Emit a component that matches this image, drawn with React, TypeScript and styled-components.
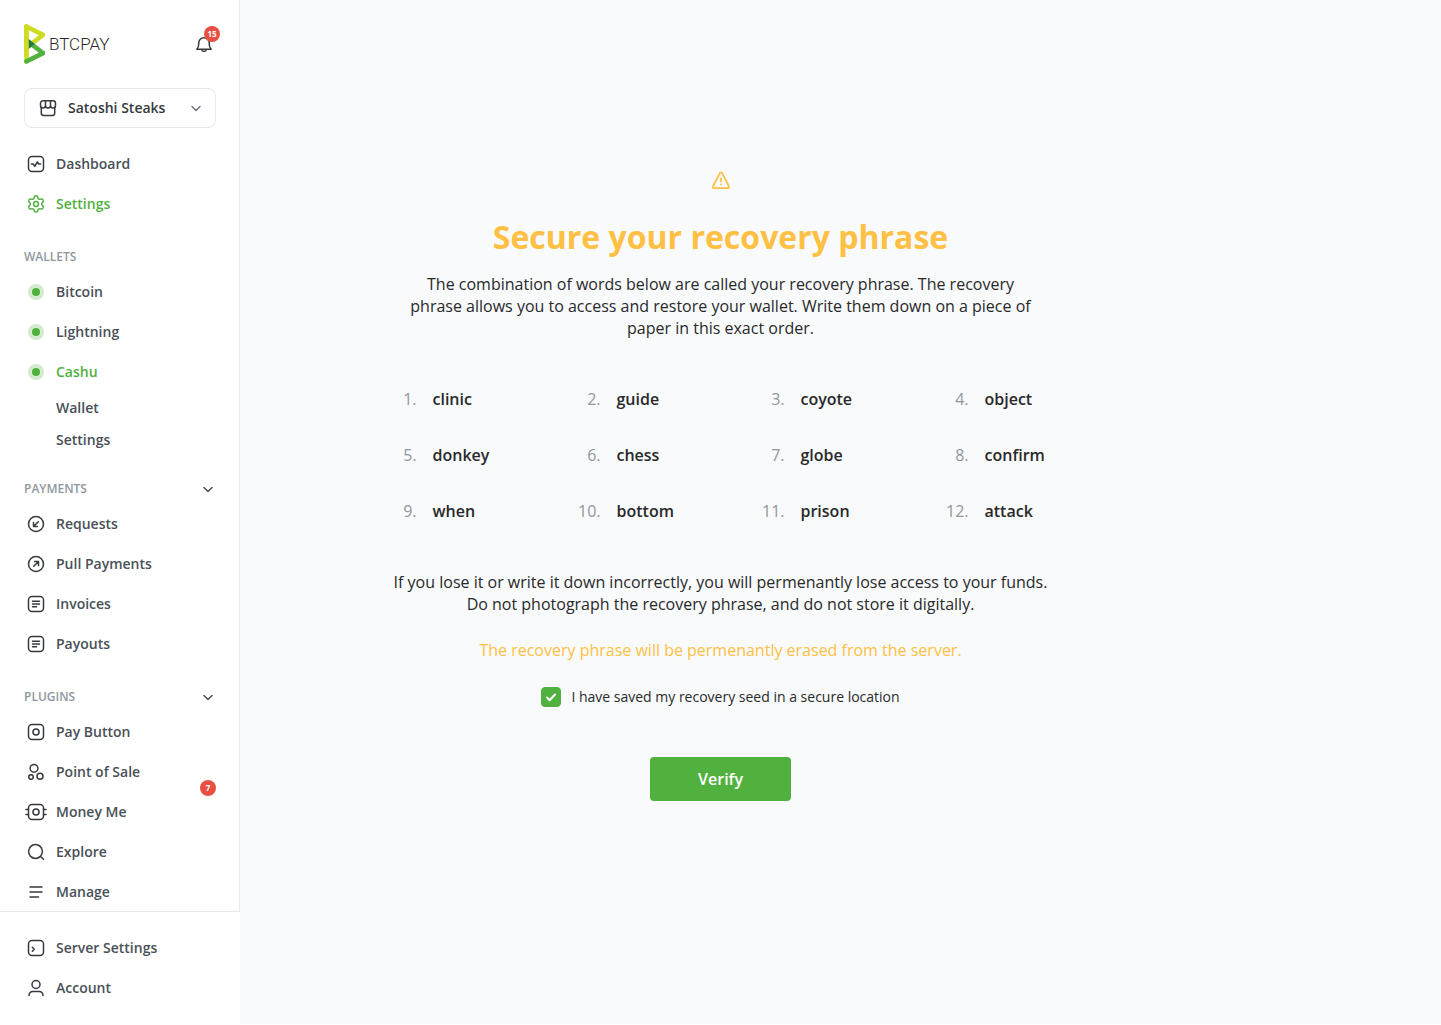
import React, { useState } from "react";
import styled, { createGlobalStyle } from "styled-components";

const color = {
  green: "#51b13e",
  amber: "#ffc043",
  red: "#e85041",
  ink: "#292929",
  nav: "#495057",
  icon: "#343a40",
  soft: "#6c757d",
  muted: "#8f979e",
  line: "#e6e8ea",
  canvas: "#f8fafc",
};

const GlobalStyle = createGlobalStyle`
  *, *::before, *::after { box-sizing: border-box; }
  body {
    margin: 0;
    background: #fff;
    color: ${color.ink};
    font-family: "Open Sans", "Noto Sans", sans-serif;
  }
  button, select, input { font-family: inherit; }
  h1, h2, p, ul, ol { margin: 0; padding: 0; }
  ul, ol { list-style: none; }
`;

const Shell = styled.div`
  display: flex;
  min-height: 100vh;
  padding-bottom: 1px;
`;

const Sidebar = styled.aside`
  display: flex;
  flex-direction: column;
  flex: 0 0 240px;
  background: #fff;
`;

const SidebarBody = styled.div`
  flex: 1 0 auto;
  padding: 24px 23px 0 24px;
  border-right: 1px solid ${color.line};
`;

const SidebarFooter = styled.nav`
  margin-top: -1px;
  padding: 16px 24px;
  border-top: 1px solid ${color.line};
  background: #fff;
`;

const Header = styled.header`
  display: flex;
  align-items: center;
  justify-content: space-between;
  height: 40px;
`;

const Brand = styled.a`
  display: flex;
  align-items: center;
  gap: 4px;
  color: ${color.ink};
  text-decoration: none;
`;

const Wordmark = styled.span`
  font-family: Roboto, sans-serif;
  font-size: 17px;
  font-weight: 300;
  line-height: 24px;
`;

const BellButton = styled.button`
  position: relative;
  display: flex;
  width: 24px;
  height: 24px;
  padding: 0;
  border: 0;
  background: none;
  color: ${color.icon};
`;

const Badge = styled.span<{ $top: number; $right: number }>`
  position: absolute;
  top: ${(p) => p.$top}px;
  right: ${(p) => p.$right}px;
  width: 16px;
  height: 16px;
  border-radius: 8px;
  background: ${color.red};
  color: #fff;
  font-size: 8px;
  font-weight: 700;
  line-height: 16px;
  text-align: center;
`;

const StorePicker = styled.label`
  display: flex;
  align-items: center;
  gap: 8px;
  height: 40px;
  margin: 24px 0 16px;
  padding: 0 7px 0 11px;
  border: 1px solid ${color.line};
  border-radius: 8px;
  color: ${color.icon};
`;

const StoreSelect = styled.select`
  flex: 1;
  min-width: 0;
  padding: 0;
  border: 0;
  appearance: none;
  background: none;
  color: ${color.icon};
  font-size: 14px;
  font-weight: 600;
  line-height: 20px;
`;

const Icon = styled.svg`
  flex: none;
  width: 24px;
  height: 24px;
  fill: none;
  stroke: currentColor;
  stroke-width: 1.5;
  stroke-linecap: round;
  stroke-linejoin: round;
`;

const SectionHead = styled.div`
  display: flex;
  align-items: center;
  justify-content: space-between;
  height: 16px;
  margin: 25px 0 7px;
`;

const SectionTitle = styled.h2`
  color: ${color.muted};
  font-size: 12px;
  font-weight: 600;
  line-height: 16px;
`;

const ToggleButton = styled.button`
  display: flex;
  width: 16px;
  height: 16px;
  align-items: center;
  justify-content: center;
  padding: 0;
  border: 0;
  background: none;
  color: ${color.nav};
`;

const NavItem = styled.li`
  position: relative;
`;

const NavLink = styled.a<{ $active?: boolean }>`
  display: flex;
  align-items: center;
  gap: 8px;
  height: 40px;
  color: ${(p) => (p.$active ? color.green : color.nav)};
  font-size: 14px;
  font-weight: 600;
  line-height: 20px;
  text-decoration: none;

  ${Icon} {
    color: ${(p) => (p.$active ? color.green : color.icon)};
  }
`;

const SubLink = styled(NavLink)`
  height: 32px;
  padding-left: 32px;
`;

const StatusDot = styled.span`
  width: 16px;
  height: 16px;
  margin: 0 4px;
  border: 4px solid #d3ebce;
  border-radius: 8px;
  background: ${color.green};
`;

const Main = styled.main`
  display: flex;
  flex: 1;
  flex-direction: column;
  align-items: center;
  padding: 168px 240px 48px 0;
  background: ${color.canvas};
`;

const Title = styled.h1`
  margin: 23px 0 14px;
  color: ${color.amber};
  font-size: 32px;
  font-weight: 700;
  line-height: 44px;
  text-align: center;
`;

const Text = styled.p<{ $warning?: boolean }>`
  max-width: 640px;
  color: ${(p) => (p.$warning ? color.amber : color.ink)};
  font-size: 16px;
  line-height: 22px;
  text-align: center;
`;

const Notice = styled(Text)`
  max-width: 672px;
  margin-bottom: 24px;
`;

const Words = styled.ol`
  display: grid;
  grid-template-columns: repeat(4, 1fr);
  gap: 32px 80px;
  width: 100%;
  max-width: 656px;
  margin: 48px 0;
`;

const Word = styled.li`
  display: grid;
  grid-template-columns: 24px 1fr;
  gap: 16px;
  font-size: 16px;
  font-weight: 600;
  line-height: 24px;
`;

const WordNumber = styled.span`
  color: ${color.muted};
  font-weight: 400;
  text-align: right;
`;

const Confirm = styled.label`
  display: flex;
  align-items: center;
  gap: 10px;
  margin-bottom: 48px;
  font-size: 14px;
  line-height: 24px;
`;

const CheckWrap = styled.span`
  display: grid;
  width: 20px;
  height: 20px;

  > * {
    grid-area: 1 / 1;
  }
`;

const Checkbox = styled.input`
  width: 20px;
  height: 20px;
  margin: 0;
  border: 1px solid ${color.green};
  border-radius: 4px;
  appearance: none;
  background: #fff;

  &:checked {
    background: ${color.green};
  }
`;

const CheckMark = styled.svg`
  width: 20px;
  height: 20px;
  fill: none;
  stroke: #fff;
  stroke-width: 2;
  stroke-linecap: round;
  stroke-linejoin: round;
  pointer-events: none;
`;

const VerifyButton = styled.button`
  height: 44px;
  padding: 0 48px;
  border: 0;
  border-radius: 4px;
  background: ${color.green};
  color: #fff;
  font-size: 16px;
  font-weight: 600;
  line-height: 22px;
`;

const LogoMark = styled.svg`
  width: 21px;
  height: 40px;
`;

const Logo = () => (
  <LogoMark viewBox="0 0 46 84" preserveAspectRatio="none" aria-hidden="true">
    <path fill="#CEDC21" d="M5.206 83.433a4.86 4.86 0 01-4.859-4.861V5.431a4.86 4.86 0 119.719 0v73.141c0 2.69-2.175 4.861-4.86 4.861" />
    <path fill="#51B13E" d="M5.209 83.433a4.862 4.862 0 01-2.086-9.253L32.43 60.274 2.323 38.093a4.861 4.861 0 015.766-7.826l36.647 26.999a4.863 4.863 0 01-.799 8.306L7.289 82.964a4.866 4.866 0 01-2.08.469" />
    <path fill="#CEDC21" d="M5.211 54.684a4.86 4.86 0 01-2.887-8.774L32.43 23.73 3.123 9.821a4.861 4.861 0 014.166-8.784l36.648 17.394a4.86 4.86 0 01.799 8.305l-36.647 27a4.844 4.844 0 01-2.878.948" />
    <path fill="#1E7A44" d="M10.066 31.725v20.553L24.01 42.006z" />
    <path fill="#CEDC21" d="M10.066 5.431A4.861 4.861 0 005.206.57 4.86 4.86 0 00.347 5.431v61.165h9.72V5.431z" />
  </LogoMark>
);

const box = <rect x="4.5" y="4.5" width="15" height="15" rx="3.5" />;

const glyphs = {
  bell: (
    <>
      <path d="M4.800 17.200h14.400c-1.300-1.300-1.900-2.600-1.900-4.700V11a5.300 5.300 0 0 0-10.600 0v1.500c0 2.100-.6 3.400-1.900 4.700Z" />
      <path d="M9.500 17.600a2.600 2.600 0 0 0 5 0" />
    </>
  ),
  store: (
    <>
      <path d="M5.300 11.500v5.800a2.200 2.200 0 0 0 2.200 2.200h9a2.200 2.200 0 0 0 2.200-2.200v-5.800" />
      <path d="M7 4.700h10a2.500 2.500 0 0 1 2.500 2.500v2.300a2.500 2.500 0 0 1-5 0 2.500 2.500 0 0 1-5 0 2.500 2.500 0 0 1-5 0V7.200A2.500 2.500 0 0 1 7 4.700ZM9.500 5v4.500M14.500 5v4.500" />
    </>
  ),
  chevron: <path d="m8 10.500 4 4 4-4" />,
  dashboard: (
    <>
      {box}
      <path d="M7.500 12h1.700l1.500 2.300 2.700-4.300 1.300 2h1.800" />
    </>
  ),
  gear: (
    <g transform="translate(2.200 2.200) scale(.816)" strokeWidth="1.8">
      <path d="M9.671 4.136a2.340 2.340 0 0 1 4.659 0 2.340 2.340 0 0 0 3.319 1.915 2.340 2.340 0 0 1 2.330 4.033 2.340 2.340 0 0 0 0 3.831 2.340 2.340 0 0 1-2.330 4.033 2.340 2.340 0 0 0-3.319 1.915 2.340 2.340 0 0 1-4.659 0 2.340 2.340 0 0 0-3.320-1.915 2.340 2.340 0 0 1-2.330-4.033 2.340 2.340 0 0 0 0-3.831A2.340 2.340 0 0 1 6.350 6.051a2.340 2.340 0 0 0 3.319-1.915" />
      <circle cx="12" cy="12" r="3" />
    </g>
  ),
  requests: (
    <>
      <circle cx="12" cy="12" r="7.500" />
      <path d="m14.300 9.700-4.600 4.600M9.500 10.600v3.900h3.900" />
    </>
  ),
  pull: (
    <>
      <circle cx="12" cy="12" r="7.500" />
      <path d="m9.700 14.300 4.600-4.600M10.600 9.500h3.900v3.900" />
    </>
  ),
  invoice: (
    <>
      {box}
      <path d="M8.500 9.300h7M8.500 12h7M8.500 14.700h4" />
    </>
  ),
  payButton: (
    <>
      {box}
      <circle cx="12" cy="12" r="3" />
    </>
  ),
  sale: (
    <>
      <circle cx="10" cy="8.300" r="3.900" />
      <circle cx="7" cy="17" r="2.300" />
      <circle cx="16" cy="16.300" r="3" />
    </>
  ),
  money: (
    <>
      {box}
      <circle cx="12" cy="12" r="3" />
      <path d="M4.500 9.500H2M4.500 14.500H2M22 9.500h-2.500M22 14.500h-2.500" />
    </>
  ),
  search: (
    <>
      <circle cx="11.500" cy="11.500" r="6.900" />
      <path d="m16.500 16.500 3 2.800" />
    </>
  ),
  manage: <path d="M6 7h12M6 12h12M6 17h8.500" />,
  server: (
    <>
      {box}
      <path d="m8.300 11.300 2 2-2 2" />
    </>
  ),
  account: (
    <>
      <circle cx="12" cy="8.500" r="4" />
      <path d="M5 19.500v-.3a3.700 3.700 0 0 1 3.700-3.700h6.600a3.700 3.700 0 0 1 3.700 3.700v.3" />
    </>
  ),
  warning: (
    <g strokeWidth="1.8">
      <path d="M10.900 5.100 4 18.300a1.200 1.200 0 0 0 1 1.800h14a1.200 1.200 0 0 0 1-1.800L13.100 5.100a1.250 1.250 0 0 0-2.200 0Z" />
      <path d="M12 10.500v2.900M12 16.400v.2" />
    </g>
  ),
};

type GlyphName = keyof typeof glyphs;

const Glyph = ({ name }: { name: GlyphName }) => (
  <Icon viewBox="0 0 24 24" aria-hidden="true">
    {glyphs[name]}
  </Icon>
);

const WarningIcon = styled(Icon)`
  color: ${color.amber};
`;

const PickerChevron = styled(Icon)`
  color: ${color.soft};
`;

type Entry = { label: string; icon: GlyphName; active?: boolean; badge?: number };

const storeLinks: Entry[] = [
  { label: "Dashboard", icon: "dashboard" },
  { label: "Settings", icon: "gear", active: true },
];

const paymentLinks: Entry[] = [
  { label: "Requests", icon: "requests" },
  { label: "Pull Payments", icon: "pull" },
  { label: "Invoices", icon: "invoice" },
  { label: "Payouts", icon: "invoice" },
];

const pluginLinks: Entry[] = [
  { label: "Pay Button", icon: "payButton" },
  { label: "Point of Sale", icon: "sale" },
  { label: "Money Me", icon: "money", badge: 7 },
  { label: "Explore", icon: "search" },
  { label: "Manage", icon: "manage" },
];

const footerLinks: Entry[] = [
  { label: "Server Settings", icon: "server" },
  { label: "Account", icon: "account" },
];

const wallets = [
  { label: "Bitcoin", active: false },
  { label: "Lightning", active: false },
  { label: "Cashu", active: true },
];

const words = [
  "clinic", "guide", "coyote", "object",
  "donkey", "chess", "globe", "confirm",
  "when", "bottom", "prison", "attack",
];

const NavList = ({ items }: { items: Entry[] }) => (
  <ul>
    {items.map((item) => (
      <NavItem key={item.label}>
        <NavLink href="#" $active={item.active}>
          <Glyph name={item.icon} />
          {item.label}
        </NavLink>
        {item.badge && <Badge $top={-12} $right={0}>{item.badge}</Badge>}
      </NavItem>
    ))}
  </ul>
);

const CollapsibleSection = ({ title, items }: { title: string; items: Entry[] }) => {
  const [open, setOpen] = useState(true);
  return (
    <section>
      <SectionHead>
        <SectionTitle>{title}</SectionTitle>
        <ToggleButton aria-label={`Toggle ${title}`} aria-expanded={open} onClick={() => setOpen(!open)}>
          <Glyph name="chevron" />
        </ToggleButton>
      </SectionHead>
      {open && <NavList items={items} />}
    </section>
  );
};

export default function App() {
  const [saved, setSaved] = useState(true);
  return (
    <>
      <GlobalStyle />
      <Shell>
        <Sidebar>
          <SidebarBody>
            <Header>
              <Brand href="#">
                <Logo />
                <Wordmark>BTCPAY</Wordmark>
              </Brand>
              <BellButton aria-label="Notifications">
                <Glyph name="bell" />
                <Badge $top={-6} $right={-4}>15</Badge>
              </BellButton>
            </Header>
            <StorePicker>
              <Glyph name="store" />
              <StoreSelect aria-label="Store">
                <option>Satoshi Steaks</option>
              </StoreSelect>
              <PickerChevron viewBox="0 0 24 24" aria-hidden="true">
                {glyphs.chevron}
              </PickerChevron>
            </StorePicker>
            <nav>
              <NavList items={storeLinks} />
              <SectionHead>
                <SectionTitle>WALLETS</SectionTitle>
              </SectionHead>
              <ul>
                {wallets.map((wallet) => (
                  <NavItem key={wallet.label}>
                    <NavLink href="#" $active={wallet.active}>
                      <StatusDot />
                      {wallet.label}
                    </NavLink>
                  </NavItem>
                ))}
                <NavItem><SubLink href="#">Wallet</SubLink></NavItem>
                <NavItem><SubLink href="#">Settings</SubLink></NavItem>
              </ul>
              <CollapsibleSection title="PAYMENTS" items={paymentLinks} />
              <CollapsibleSection title="PLUGINS" items={pluginLinks} />
            </nav>
          </SidebarBody>
          <SidebarFooter>
            <NavList items={footerLinks} />
          </SidebarFooter>
        </Sidebar>
        <Main>
          <WarningIcon viewBox="0 0 24 24" aria-hidden="true">
            {glyphs.warning}
          </WarningIcon>
          <Title>Secure your recovery phrase</Title>
          <Text>
            The combination of words below are called your recovery phrase. The recovery phrase
            allows you to access and restore your wallet. Write them down on a piece of paper in
            this exact order.
          </Text>
          <Words>
            {words.map((word, index) => (
              <Word key={word}>
                <WordNumber>{index + 1}.</WordNumber>
                {word}
              </Word>
            ))}
          </Words>
          <Notice>
            If you lose it or write it down incorrectly, you will permenantly lose access to your
            funds. Do not photograph the recovery phrase, and do not store it digitally.
          </Notice>
          <Notice $warning>The recovery phrase will be permenantly erased from the server.</Notice>
          <Confirm>
            <CheckWrap>
              <Checkbox type="checkbox" checked={saved} onChange={(e) => setSaved(e.target.checked)} />
              {saved && (
                <CheckMark viewBox="0 0 20 20" aria-hidden="true">
                  <path d="m6 10.500 2.700 2.700L14 7.500" />
                </CheckMark>
              )}
            </CheckWrap>
            I have saved my recovery seed in a secure location
          </Confirm>
          <VerifyButton>Verify</VerifyButton>
        </Main>
      </Shell>
    </>
  );
}
